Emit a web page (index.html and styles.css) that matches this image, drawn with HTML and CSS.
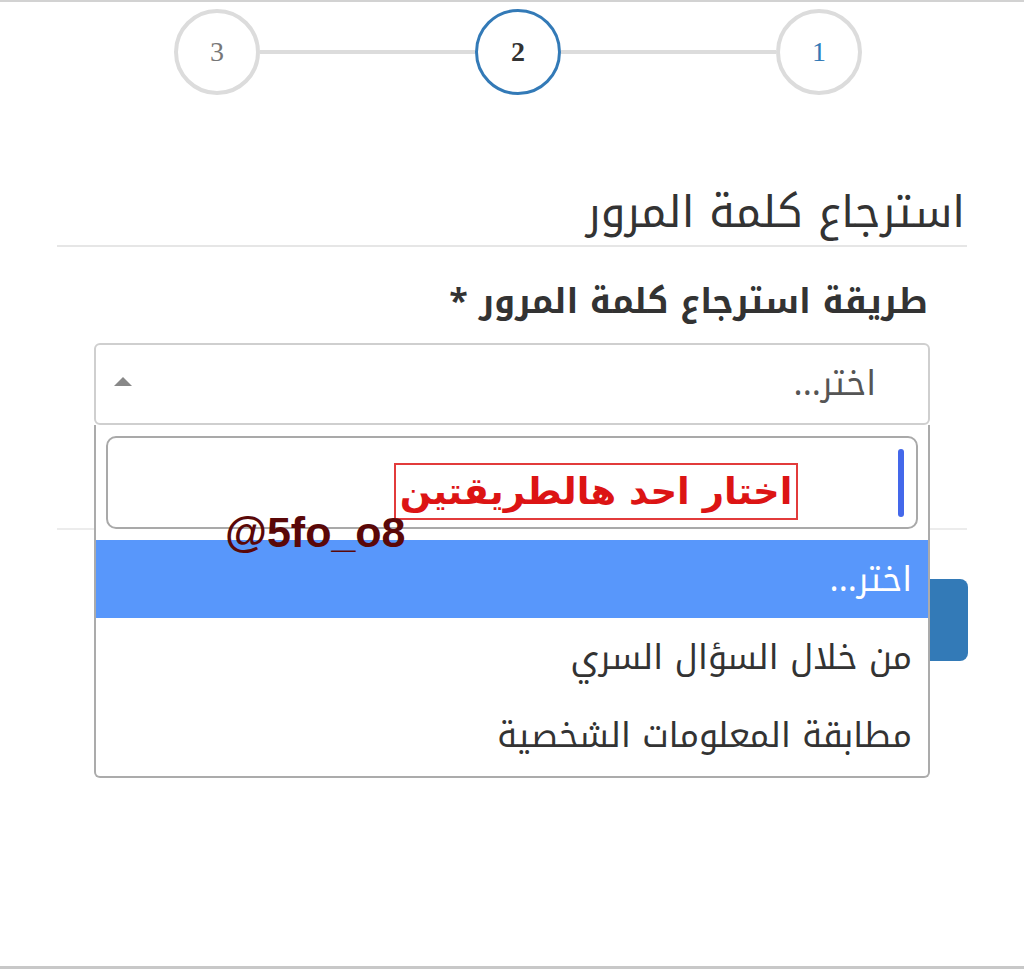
FILE: index.html
```html
<!DOCTYPE html>
<html lang="ar" dir="rtl">
<head>
<meta charset="utf-8">
<title>استرجاع كلمة المرور</title>
<link rel="stylesheet" href="styles.css">
</head>
<body>
<div class="page">
  <div class="stepper">
    <div class="step step-done">1</div>
    <div class="bar"></div>
    <div class="step step-active">2</div>
    <div class="bar"></div>
    <div class="step">3</div>
  </div>

  <div class="content">
    <h2 class="title">استرجاع كلمة المرور</h2>

    <form class="form">
      <div class="field">
        <label class="label">طريقة استرجاع كلمة المرور *</label>
        <div class="select">
          <div class="select-box">
            <span class="placeholder">اختر...</span>
            <span class="arrow"></span>
          </div>
          <div class="dropdown">
            <div class="search"><span class="caret"></span></div>
            <ul class="options">
              <li class="option option-hl">اختر...</li>
              <li class="option">من خلال السؤال السري</li>
              <li class="option">مطابقة المعلومات الشخصية</li>
            </ul>
          </div>
        </div>
      </div>
      <hr class="sep">
      <div class="actions"><button type="button" class="btn" aria-label="التالي"></button></div>
    </form>
  </div>

  <div class="note">اختار احد هالطريقتين</div>
  <div class="tag" dir="ltr">@5fo_o8</div>
</div>
</body>
</html>
```

FILE: styles.css
```css
html, body {
  margin: 0;
  padding: 0;
  background: #fff;
}

.page {
  position: relative;
  height: 969px;
  box-sizing: border-box;
  border-top: 2px solid #d2d2d2;
  border-bottom: 3px solid #c8c8c8;
  font-family: "Noto Kufi Arabic", "Noto Sans Arabic", "DejaVu Sans", sans-serif;
  color: #333;
}

/* wizard steps */
.stepper {
  display: flex;
  align-items: center;
  padding-right: 162px;
  margin-top: 7px;
}

.step {
  width: 86px;
  height: 86px;
  box-sizing: border-box;
  border: 4px solid #dcdcdc;
  border-radius: 50%;
  display: flex;
  align-items: center;
  justify-content: center;
  font-family: "Liberation Serif", serif;
  font-size: 28px;
  color: #777;
  flex: none;
}

.step-done {
  color: #337ab7;
}

.step-active {
  border: 3px solid #337ab7;
  color: #333;
  font-weight: bold;
}

.bar {
  width: 215px;
  height: 4px;
  background: #dcdcdc;
  flex: none;
}

/* form area */
.content {
  padding: 0 57px;
}

.title {
  margin: 90px 0 0;
  padding-bottom: 4px;
  border-bottom: 2px solid #e6e6e6;
  font-size: 44px;
  font-weight: normal;
  line-height: 56px;
  color: #333;
  padding-right: 2px;
}

.form {
  margin: 0;
}

.field {
  padding: 34px 37px 0;
}

.label {
  display: block;
  font-size: 34px;
  font-weight: bold;
  line-height: 42px;
  margin-bottom: 20px;
  padding-right: 2px;
}

.select {
  position: relative;
}

.select-box {
  height: 82px;
  box-sizing: border-box;
  border: 2px solid #cfcfcf;
  border-radius: 6px;
  display: flex;
  align-items: center;
  justify-content: space-between;
  padding: 0 52px 0 18px;
}

.placeholder {
  font-size: 34px;
  line-height: 44px;
  color: #555;
}

.arrow {
  width: 0;
  height: 0;
  border-left: 9px solid transparent;
  border-right: 9px solid transparent;
  border-bottom: 9px solid #888;
  margin-bottom: 6px;
}

/* open list, drawn over the rest of the form */
.dropdown {
  position: absolute;
  top: 100%;
  left: 0;
  right: 0;
  z-index: 5;
  background: #fff;
  border: 2px solid #ababab;
  border-top: none;
  border-radius: 0 0 6px 6px;
  padding-top: 11px;
}

.search {
  margin: 0 10px;
  height: 93px;
  box-sizing: border-box;
  border: 2px solid #a9a9a9;
  border-radius: 10px;
  display: flex;
  align-items: center;
  padding-right: 12px;
}

.caret {
  width: 6px;
  height: 68px;
  border-radius: 3px;
  background: #4468ea;
}

.options {
  list-style: none;
  margin: 11px 0 2px;
  padding: 0;
}

.option {
  height: 78px;
  display: flex;
  align-items: center;
  padding-right: 16px;
  font-size: 34px;
  color: #333;
}

.option-hl {
  background: #5897fb;
  color: #fff;
}

.sep {
  margin: 103px 0 0;
  border: none;
  border-top: 2px solid #ececec;
}

.actions {
  display: flex;
  padding-top: 49px;
}

.btn {
  width: 180px;
  height: 82px;
  margin-right: -1px;
  border: none;
  border-radius: 8px;
  background: #337ab7;
}

/* overlay annotations */
.note {
  position: absolute;
  left: 394px;
  top: 461px;
  width: 404px;
  height: 57px;
  box-sizing: border-box;
  border: 2px solid #e23b3b;
  z-index: 10;
  display: flex;
  align-items: center;
  justify-content: center;
  font-family: "DejaVu Sans", sans-serif;
  font-weight: 900;
  font-size: 37px;
  color: #dc1414;
  background: #fff;
}

.tag {
  position: absolute;
  left: 225px;
  top: 505px;
  z-index: 10;
  font-family: "Liberation Sans", Arial, sans-serif;
  font-weight: bold;
  font-size: 43px;
  line-height: 50px;
  color: #5a0808;
}
```
